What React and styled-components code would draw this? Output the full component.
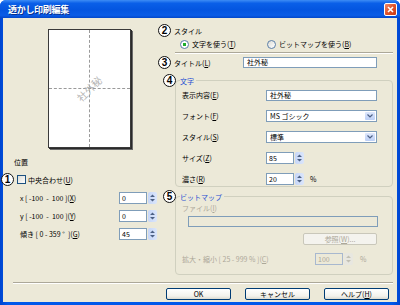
import React from 'react';
import styled, { createGlobalStyle } from 'styled-components';

const GlobalStyle = createGlobalStyle`
  html, body { margin: 0; padding: 0; background: #fff; }
  body { font-family: "Noto Sans CJK JP", "Liberation Sans", sans-serif; }
  * { box-sizing: border-box; }
  u { text-decoration: underline; text-underline-offset: 1px; }
`;

const Window = styled.div`
  width: 400px;
  height: 305px;
  display: flex;
  flex-direction: column;
  background: #0055e5;
  border-radius: 6px 6px 0 0;
  overflow: hidden;
`;

const TitleBar = styled.div`
  height: 18px;
  flex: none;
  display: flex;
  align-items: center;
  justify-content: space-between;
  padding: 0 3px 0 8px;
  background: linear-gradient(#3d8cf5 0%, #0a5fe8 18%, #0455e0 55%, #0a5ce6 85%, #0347c9 100%);
`;

const TitleText = styled.span`
  color: #fff;
  font-size: 9px;
  font-weight: 700;
  letter-spacing: -0.3px;
  text-shadow: 1px 1px 0 #0a2f8a;
`;

const CloseButton = styled.div`
  width: 13px;
  height: 13px;
  border: 1px solid #fff;
  border-radius: 2px;
  background: linear-gradient(135deg, #f08a6a 0%, #e0532a 50%, #c83a14 100%);
  display: flex;
  align-items: center;
  justify-content: center;
`;

const Frame = styled.div`
  flex: 1;
  display: flex;
  padding: 0 3px 3px 3px;
  background: linear-gradient(90deg, #0045d0, #0058ea 2%, #0058ea 98%, #0045d0);
`;

const Body = styled.div`
  flex: 1;
  display: flex;
  flex-direction: column;
  background: #ece9d8;
  color: #000;
  font-size: 7px;
  line-height: 12px;
`;

const Main = styled.div`
  height: 264px;
  display: flex;
`;

const LeftCol = styled.div`
  width: 154px;
  padding-top: 11px;
  display: flex;
  flex-direction: column;
`;

const Page = styled.div`
  position: relative;
  margin-left: 45px;
  width: 83px;
  height: 119px;
  background: #fff;
  border: 1px solid #3a3a3a;
  box-shadow: 1px 1px 0 #2a2a2a, 2px 2px 0 #6a6a6a;
  overflow: hidden;

  &::before {
    content: '';
    position: absolute;
    left: 40px;
    top: 0;
    bottom: 0;
    border-left: 1px dashed #9a9a9a;
  }
  &::after {
    content: '';
    position: absolute;
    top: 58px;
    left: 0;
    right: 0;
    border-top: 1px dashed #9a9a9a;
  }
`;

const Watermark = styled.span`
  position: absolute;
  left: 50%;
  top: 50%;
  transform: translate(-52%, -50%) rotate(-45deg);
  color: #b4b4b4;
  font-size: 10px;
  line-height: 10px;
  white-space: nowrap;
  z-index: 1;
`;

const SectionTitle = styled.div`
  margin: 8px 0 0 11px;
  height: 12px;
`;

const CheckRow = styled.div`
  margin: 5px 0 0 -2px;
  height: 13px;
  display: flex;
  align-items: center;
`;

const Circle = styled.span`
  width: 13px;
  height: 13px;
  flex: none;
  border: 1px solid #111;
  border-radius: 50%;
  background: #fff;
  display: inline-flex;
  align-items: center;
  justify-content: center;
  font-family: "Liberation Sans", sans-serif;
  font-weight: 700;
  font-size: 10px;
  line-height: 1;
  color: #000;
`;

const CheckBox = styled.span`
  width: 9px;
  height: 9px;
  margin: 0 2px 0 3px;
  border: 1px solid #1c5180;
  background: linear-gradient(135deg, #dcdcd6, #fff);
`;

const PosRows = styled.div`
  margin-top: 6px;
  display: flex;
  flex-direction: column;
  gap: 6px;
`;

const PosRow = styled.div`
  height: 12px;
  display: grid;
  grid-template-columns: 99px auto;
  align-items: center;
  padding-left: 17px;
  white-space: nowrap;
`;

const SpinWrap = styled.div`
  height: 12px;
  display: flex;
  align-items: stretch;
  gap: 1px;
`;

const NumField = styled.div`
  width: 28px;
  border: 1px solid ${p => (p.disabled ? '#a8b8cf' : '#7f9db9')};
  background: ${p => (p.disabled ? '#ece9d8' : '#fff')};
  color: ${p => (p.disabled ? '#aca899' : '#000')};
  padding-left: 2px;
  line-height: 10px;
`;

const Spinner = styled.div`
  width: 9px;
  border-radius: 2px;
  background: ${p => (p.disabled ? '#e8e7e0' : 'linear-gradient(90deg, #c6d6f8, #dbe6fb)')};
  display: flex;
  align-items: center;
  justify-content: center;
`;

const Unit = styled.span`
  margin-left: ${p => p.gap || 5}px;
  color: ${p => (p.disabled ? '#aca899' : '#000')};
  align-self: center;
`;

const RightCol = styled.div`
  flex: 1;
  padding-top: 6px;
  display: flex;
  flex-direction: column;
`;

const HeadRow = styled.div`
  height: 13px;
  margin-left: 1px;
  display: flex;
  align-items: center;
  gap: 3px;
`;

const RadioRow = styled.div`
  height: 12px;
  margin-top: 1px;
  padding-left: 23px;
  display: flex;
  align-items: center;
`;

const RadioOption = styled.label`
  width: ${p => p.w || 'auto'};
  display: flex;
  align-items: center;
  gap: 3px;
  white-space: nowrap;
`;

const RadioDot = styled.span`
  width: 9px;
  height: 9px;
  border-radius: 50%;
  border: 1px solid #5b7fa8;
  background: ${p =>
    p.checked
      ? 'radial-gradient(circle, #1fae2b 0 1.6px, #fff 2px)'
      : 'linear-gradient(135deg, #dcdcd6, #fff)'};
`;

const Etched = styled.div`
  height: 2px;
  flex: none;
  border-top: 1px solid #aca899;
  border-bottom: 1px solid #fff;
  margin: ${p => p.m};
`;

const TitleRow = styled.div`
  height: 13px;
  margin: 2px 0 0 1px;
  display: grid;
  grid-template-columns: 85px 134px;
  align-items: center;
`;

const HeadLabel = styled.div`
  display: flex;
  align-items: center;
  gap: 3px;
`;

const TextField = styled.div`
  width: ${p => p.w}px;
  height: 11px;
  border: 1px solid #7f9db9;
  background: ${p => (p.disabled ? '#ece9d8' : '#fff')};
  padding-left: 3px;
  line-height: 9px;
  margin-left: ${p => p.ml || 0}px;
`;

const Group = styled.div`
  position: relative;
  margin: ${p => p.mt}px 4px 0 18px;
  height: ${p => p.h}px;
  border: 1px solid #d0d0bf;
  border-radius: 4px;
  padding: ${p => p.pt}px 0 0 6px;
`;

const Legend = styled.div`
  position: absolute;
  top: -7px;
  left: -13px;
  display: flex;
  align-items: center;
  gap: 4px;
`;

const LegendText = styled.span`
  color: #1e4fd3;
  background: #ece9d8;
  padding-right: 2px;
  line-height: 12px;
`;

const FieldRows = styled.div`
  display: flex;
  flex-direction: column;
  gap: 9px;
`;

const FieldRow = styled.div`
  height: 12px;
  display: grid;
  grid-template-columns: ${p => p.cols || '84px'} auto;
  align-items: center;
  white-space: nowrap;
  color: ${p => (p.disabled ? '#aca899' : '#000')};
`;

const Select = styled.div`
  width: 111px;
  height: 12px;
  border: 1px solid #7f9db9;
  background: #fff;
  display: flex;
  align-items: stretch;
  justify-content: space-between;
  padding: 1px 1px 1px 3px;
  line-height: 8px;
`;

const DropButton = styled.span`
  width: 10px;
  border-radius: 1px;
  background: linear-gradient(#dfe8fc, #bccff6);
  display: flex;
  align-items: center;
  justify-content: center;
`;

const DisabledLabel = styled.div`
  height: 12px;
  color: #aca899;
`;

const Button = styled.div`
  width: ${p => p.w || 65}px;
  height: 12px;
  border: 1px solid ${p => (p.disabled ? '#c9c7ba' : '#003c74')};
  border-radius: 2px;
  background: ${p => (p.disabled ? '#f4f3ee' : 'linear-gradient(#fff, #f3f2ec 70%, #dcdad0)')};
  color: ${p => (p.disabled ? '#aca899' : '#000')};
  display: flex;
  align-items: center;
  justify-content: center;
  line-height: 10px;
  margin: ${p => p.m || 0};
`;

const Footer = styled.div`
  margin-top: 4px;
  display: flex;
  justify-content: flex-end;
  gap: 14px;
  padding-right: 8px;
`;

const SpinArrows = ({ color = '#4d6185' }) => (
  <svg width="5" height="8" viewBox="0 0 5 8">
    <path d="M0 3 L2.5 0.5 L5 3 Z M0 5 L2.5 7.5 L5 5 Z" fill={color} />
  </svg>
);

const Spin = ({ value, disabled }) => (
  <SpinWrap>
    <NumField disabled={disabled}>{value}</NumField>
    <Spinner disabled={disabled}>
      <SpinArrows color={disabled ? '#c2c0b4' : '#4d6185'} />
    </Spinner>
  </SpinWrap>
);

const Dropdown = ({ value }) => (
  <Select>
    <span>{value}</span>
    <DropButton>
      <svg width="6" height="4" viewBox="0 0 6 4">
        <path d="M0.5 0.5 L3 3 L5.5 0.5" fill="none" stroke="#4d6185" strokeWidth="1.2" />
      </svg>
    </DropButton>
  </Select>
);

const App = () => (
  <>
    <GlobalStyle />
    <Window>
      <TitleBar>
        <TitleText>透かし印刷編集</TitleText>
        <CloseButton>
          <svg width="7" height="7" viewBox="0 0 7 7">
            <path d="M1 1 L6 6 M6 1 L1 6" stroke="#fff" strokeWidth="1.6" />
          </svg>
        </CloseButton>
      </TitleBar>
      <Frame>
        <Body>
          <Main>
            <LeftCol>
              <Page>
                <Watermark>社外秘</Watermark>
              </Page>
              <SectionTitle>位置</SectionTitle>
              <CheckRow>
                <Circle>1</Circle>
                <CheckBox />
                <span>中央合わせ(<u>U</u>)</span>
              </CheckRow>
              <PosRows>
                <PosRow>
                  <span>x [ -100 &nbsp;- &nbsp;100 ](<u>X</u>)</span>
                  <Spin value="0" />
                </PosRow>
                <PosRow>
                  <span>y [ -100 &nbsp;- &nbsp;100 ](<u>Y</u>)</span>
                  <Spin value="0" />
                </PosRow>
                <PosRow>
                  <span>傾き [ 0 - 359 ° &nbsp;](<u>G</u>)</span>
                  <Spin value="45" />
                </PosRow>
              </PosRows>
            </LeftCol>
            <RightCol>
              <HeadRow>
                <Circle>2</Circle>
                <span>スタイル</span>
              </HeadRow>
              <RadioRow>
                <RadioOption w="87px">
                  <RadioDot checked />
                  <span>文字を使う(<u>T</u>)</span>
                </RadioOption>
                <RadioOption>
                  <RadioDot />
                  <span>ビットマップを使う(<u>B</u>)</span>
                </RadioOption>
              </RadioRow>
              <Etched m="2px 4px 0 18px" />
              <TitleRow>
                <HeadLabel>
                  <Circle>3</Circle>
                  <span>タイトル(<u>L</u>)</span>
                </HeadLabel>
                <TextField w={134}>社外秘</TextField>
              </TitleRow>

              <Group mt={11} h={107} pt={8}>
                <Legend>
                  <Circle>4</Circle>
                  <LegendText>文字</LegendText>
                </Legend>
                <FieldRows>
                  <FieldRow>
                    <span>表示内容(<u>E</u>)</span>
                    <TextField w={111}>社外秘</TextField>
                  </FieldRow>
                  <FieldRow>
                    <span>フォント(<u>F</u>)</span>
                    <Dropdown value="MS ゴシック" />
                  </FieldRow>
                  <FieldRow>
                    <span>スタイル(<u>S</u>)</span>
                    <Dropdown value="標準" />
                  </FieldRow>
                  <FieldRow>
                    <span>サイズ(<u>Z</u>)</span>
                    <Spin value="85" />
                  </FieldRow>
                  <FieldRow>
                    <span>濃さ(<u>R</u>)</span>
                    <SpinWrap>
                      <NumField>20</NumField>
                      <Spinner>
                        <SpinArrows />
                      </Spinner>
                      <Unit gap={5}>%</Unit>
                    </SpinWrap>
                  </FieldRow>
                </FieldRows>
              </Group>

              <Group mt={9} h={79} pt={5}>
                <Legend>
                  <Circle>5</Circle>
                  <LegendText>ビットマップ</LegendText>
                </Legend>
                <DisabledLabel>ファイル(<u>I</u>)</DisabledLabel>
                <TextField w={190} ml={6} disabled style={{ marginTop: 2 }} />
                <Button w={74} disabled m="6px 0 0 121px">参照(<u>W</u>)...</Button>
                <FieldRow cols="133px" disabled style={{ marginTop: 8 }}>
                  <span>拡大・縮小 [ 25 - 999 % ](<u>C</u>)</span>
                  <SpinWrap>
                    <NumField disabled>100</NumField>
                    <Spinner disabled>
                      <SpinArrows color="#c2c0b4" />
                    </Spinner>
                    <Unit gap={6} disabled>%</Unit>
                  </SpinWrap>
                </FieldRow>
              </Group>
            </RightCol>
          </Main>
          <Etched m="0 4px 0 10px" />
          <Footer>
            <Button>OK</Button>
            <Button>キャンセル</Button>
            <Button>ヘルプ(<u>H</u>)</Button>
          </Footer>
        </Body>
      </Frame>
    </Window>
  </>
);

export default App;
